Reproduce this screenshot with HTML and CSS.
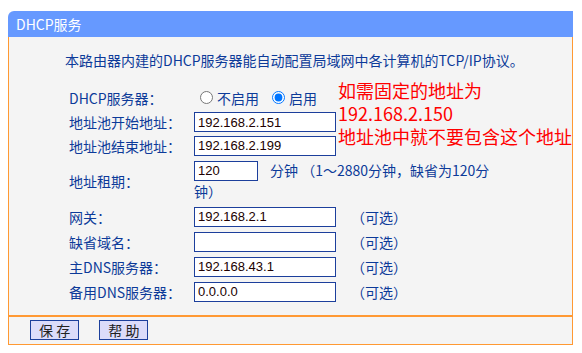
FILE: index.html
```html
<!DOCTYPE html>
<html lang="zh-CN">
<head>
  <meta charset="UTF-8" />
  <title>DHCP服务</title>
  <link rel="stylesheet" href="styles.css">
</head>
<body>

  <div class="panel">
    <div class="panel-head">DHCP服务</div>

    <div class="panel-body">
      <p class="intro">本路由器内建的DHCP服务器能自动配置局域网中各计算机的TCP/IP协议。</p>

      <div class="form-grid">
        <div class="label">DHCP服务器：</div>
        <div class="field">
          <label class="radio"><input type="radio" name="dhcp" />不启用</label>
          <label class="radio"><input type="radio" name="dhcp" checked />启用</label>
        </div>

        <div class="label">地址池开始地址：</div>
        <div class="field"><input class="text-box" type="text" value="192.168.2.151" /></div>

        <div class="label">地址池结束地址：</div>
        <div class="field"><input class="text-box" type="text" value="192.168.2.199" /></div>

        <div class="label">地址租期：</div>
        <div class="field lease">
          <input class="text-box short" type="text" value="120" /><span class="unit">分钟 （1～2880分钟，缺省为120分钟）</span>
        </div>

        <div class="label">网关：</div>
        <div class="field"><input class="text-box" type="text" value="192.168.2.1" /><span class="hint">（可选）</span></div>

        <div class="label">缺省域名：</div>
        <div class="field"><input class="text-box" type="text" value="" /><span class="hint">（可选）</span></div>

        <div class="label">主DNS服务器：</div>
        <div class="field"><input class="text-box" type="text" value="192.168.43.1" /><span class="hint">（可选）</span></div>

        <div class="label">备用DNS服务器：</div>
        <div class="field"><input class="text-box" type="text" value="0.0.0.0" /><span class="hint">（可选）</span></div>
      </div>

      <!-- 红色批注 -->
      <div class="note">如需固定的地址为<br />192.168.2.150<br />地址池中就不要包含这个地址</div>
    </div>

    <div class="panel-foot">
      <button class="btn">保 存</button>
      <button class="btn">帮 助</button>
    </div>
  </div>

</body>
</html>
```

FILE: styles.css
```css
body {
  margin: 0;
  padding: 11px 9px 0 8px;
  background: #fff;
  font-family: "Noto Sans CJK SC", "Noto Sans", sans-serif;
  font-size: 14px;
  color: #0c3a99;
}

.panel {
  width: 565px;
}

.panel-head {
  height: 26px;
  line-height: 26px;
  padding-left: 8px;
  background: #6699ff;
  color: #fff;
  border-top-left-radius: 6px;
}

.panel-body {
  position: relative;
  background: #f4f4f4;
  border-left: 1px solid #ff9933;
  border-right: 1px solid #ff9933;
  padding: 13px 0 11px;
}

.intro {
  margin: 0;
  padding-left: 56px;
  line-height: 20px;
}

.form-grid {
  display: grid;
  grid-template-columns: 125px auto;
  grid-template-rows: 25px 24px 23px 47px 25px 25px 25px 25px;
  align-items: center;
  justify-items: start;
  margin-top: 15px;
  padding-left: 60px;
}

.field {
  display: flex;
  align-items: center;
}

.radio {
  display: flex;
  align-items: center;
  margin-right: 7px;
}

.radio input {
  margin: 0 4px 0 6px;
}

.text-box {
  box-sizing: border-box;
  width: 142px;
  height: 20px;
  padding: 0 3px;
  border: 1px solid #1c3f9c;
  background: #fff;
  font-family: "Liberation Sans", Arial, sans-serif;
  font-size: 13px;
  color: #200000;
  outline: none;
}

.text-box.short {
  width: 64px;
}

.field.lease {
  display: block;
  width: 302px;
  line-height: 21px;
}

.lease .text-box {
  vertical-align: top;
  margin-top: 1px;
}

.unit {
  margin-left: 12px;
}

.hint {
  margin-left: 15px;
}

/* 批注文字 */
.note {
  position: absolute;
  left: 329px;
  top: 42px;
  font-size: 18px;
  line-height: 23px;
  color: #ff0000;
  white-space: nowrap;
}

.panel-foot {
  box-sizing: border-box;
  height: 30px;
  padding: 3px 0 0 21px;
  background: #f4f4f4;
  border: 1px solid #ff9933;
  border-top: 2px solid #ff9933;
}

.btn {
  height: 20px;
  padding: 0 8px;
  margin-right: 17px;
  background: #dcdcfa;
  border: 1px solid #1c3f9c;
  font-family: "Noto Sans CJK SC", sans-serif;
  font-size: 14px;
  line-height: 18px;
  color: #222;
  cursor: pointer;
}
```
